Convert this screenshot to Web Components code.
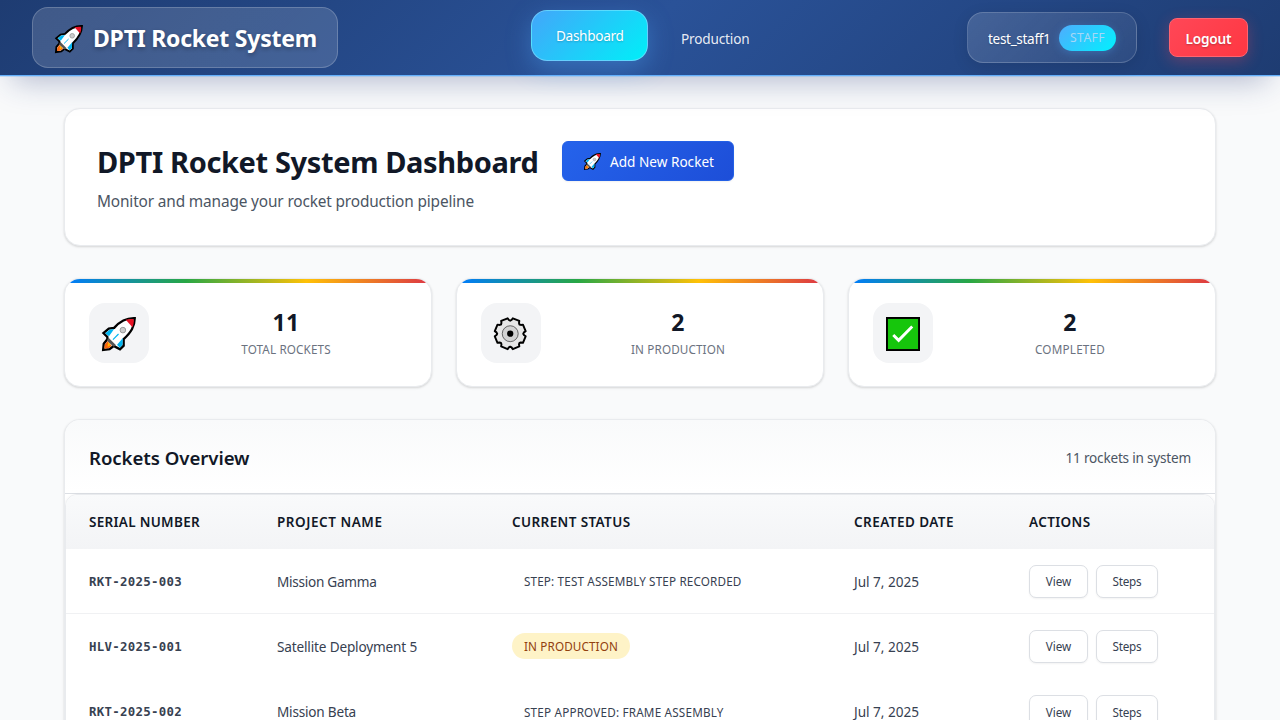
<!DOCTYPE html>
<html lang="en">
<head>
<meta charset="utf-8">
<title>DPTI Rocket System</title>
<style>
html{height:100%;overflow:hidden}
body{margin:0;height:720px;overflow:hidden;background:#f9fafb;font-family:"Noto Sans","Open Sans",sans-serif;color:#374151}
</style>
</head>
<body>
<rocket-dashboard-page></rocket-dashboard-page>
<script>
const define=(name,css,html,ready)=>{
  const t=document.createElement('template');
  t.innerHTML=`<style>*{box-sizing:border-box}${css}</style>${html}`;
  customElements.define(name,class extends HTMLElement{
    constructor(){super();this.attachShadow({mode:'open'}).append(t.content.cloneNode(true));}
    connectedCallback(){if(ready)ready.call(this,this.shadowRoot);}
  });
};

/* A single line of text tracked so that it fills the given width. */
define('fit-text',':host{display:inline-block;white-space:nowrap;flex:none}span{display:inline-block}','<span><slot></slot></span>',function(root){
  const s=root.querySelector('span'),w=+this.getAttribute('w');
  const n=this.textContent.length;
  const own=s.getBoundingClientRect().width;
  s.style.letterSpacing=((w-own)/n)+'px';
  this.style.width=w+'px';
});

const icons={
rocket:`<path d="M33.7 1.2C26 .9 19 3.800 12.5 11.200L7 12 1.500 16.500 5.500 20.500 5.500 23 1.800 27.500 1.200 33.800 7.800 33 12 29.800 18.500 33.300 22.300 29.500 22.300 22.800C30 15.500 33.500 10 33.700 1.200Z" fill="#fff" stroke="#000" stroke-width="2.400"/><path d="M24.500 2.900C27 2.100 30 1.900 32.600 2.300 33 5 32.500 8 31.300 10.500Z" fill="#e81224"/><path d="M12.500 12.400 7.900 13.200 3.300 16.600 7.200 19.700ZM21.500 21.500 15.500 28.500 18.300 31.700 21.100 28.900Z" fill="#00b4f0"/><path d="M6.500 21 14.500 29 12 30.500 5 24.500Z" fill="#555"/><path d="M5.600 25 10 29.500 7.300 31.900 2.400 32.600 2.900 28.300Z" fill="#f7630c"/><path d="M6.200 26 8.800 28.800 5.800 30.800Z" fill="#ffb900"/><circle cx="21.500" cy="13.500" r="2.900" fill="#ccc" stroke="#999" stroke-width="1"/><path d="M17 17.500 11.300 23.200" stroke="#00b4f0" stroke-width="1.200" fill="none"/>`,
gear:'',
check:`<rect x="1" y="1" width="33" height="33" fill="#16c60c" stroke="#000" stroke-width="2"/><path d="M7.500 18.500 13 24 27 9.800" fill="none" stroke="#fff" stroke-width="3"/>`
};
{
  let d='';
  for(let i=0;i<8;i++){
    const c=(i*45-90)*Math.PI/180;
    [[-17,14.2],[-13,16.1],[13,16.1],[17,14.2],[22.5,13.4]].forEach(([a,r],j)=>{
      const q=c+a*Math.PI/180+Math.PI/8;
      d+=(i||j?'L':'M')+(16.7+r*Math.cos(q)).toFixed(2)+' '+(17.2+r*Math.sin(q)).toFixed(2);
    });
  }
  icons.gear=`<path d="${d}Z" fill="#e6e6e6" stroke="#000" stroke-width="2" stroke-linejoin="round"/><circle cx="16.700" cy="17.200" r="8.200" fill="#d2d2d2" stroke="#444" stroke-width=".8"/><circle cx="16.700" cy="17.200" r="3.200" fill="#000"/>`;
}
define('ui-icon',':host{display:block;flex:none}svg{display:block;width:100%;height:100%;overflow:visible}','<svg viewBox="0 0 35 35"></svg>',function(root){
  root.querySelector('svg').innerHTML=icons[this.getAttribute('name')];
  const s=this.getAttribute('size');this.style.width=s+'px';this.style.height=s+'px';
});

define('app-header',`
:host{display:flex;box-sizing:border-box;height:76px;align-items:flex-start;justify-content:space-between;padding:0 32px;position:relative;z-index:2;color:#fff;
background:linear-gradient(135deg,#1e3c72 0%,#2a5298 50%,#1e3c72 100%);border-bottom:1px solid #64b0fb;box-shadow:0 1px 0 rgba(100,176,251,.3),0 16px 32px -12px rgba(30,50,114,.34)}
.brand{display:flex;align-items:center;width:306px;height:61px;margin-top:7px;padding:2px 0 0 22px;gap:10px;border:1px solid rgba(255,255,255,.2);border-radius:16px;background:linear-gradient(135deg,rgba(255,255,255,.15),rgba(255,255,255,.14));font-size:23px;font-weight:700;text-shadow:0 2px 4px rgba(0,0,0,.3)}
.brand fit-text{margin-top:-2px}
nav{display:flex;width:252px;margin-left:9px;font-size:13.600px;font-weight:400}
.on{width:117px;height:51px;margin-top:10px;padding-left:24px;display:flex;align-items:center;border-radius:16px;border:1px solid rgba(130,220,255,.65);background:linear-gradient(135deg,#43a6fa,#00eff8);box-shadow:0 8px 25px rgba(79,172,254,.35);text-shadow:0 1px 2px rgba(0,0,0,.2)}
.off{margin:29px 0 0 33px;color:rgba(255,255,255,.9)}
.right{display:flex;gap:32px;font-size:13.600px}
.user{display:flex;align-items:center;width:170px;height:51px;margin-top:12px;padding-left:20px;border:1px solid rgba(255,255,255,.18);border-radius:16px;background:linear-gradient(135deg,rgba(255,255,255,.15),rgba(255,255,255,.06));box-shadow:0 4px 16px rgba(0,0,0,.1);text-shadow:0 1px 2px rgba(0,0,0,.2)}
.user>fit-text{margin-top:2px}
.role{display:flex;align-items:center;justify-content:center;width:57px;height:26px;margin-left:8px;padding-left:1px;border-radius:13px;background:linear-gradient(135deg,#4facfe,#00f2fe);box-shadow:0 2px 8px rgba(79,172,254,.3);color:#a6d7f6;font-size:12.200px;text-shadow:none}
.out{display:flex;align-items:center;justify-content:center;width:79px;height:39px;margin-top:18px;padding-top:1px;border:1px solid #ff6470;border-radius:8px;background:linear-gradient(135deg,#ff4757,#ff3742);box-shadow:0 4px 15px rgba(255,71,87,.3);font-weight:600;text-shadow:0 1px 2px rgba(0,0,0,.25)}
`,`<div class="brand"><ui-icon name="rocket" size="28"></ui-icon><fit-text w="224">DPTI Rocket System</fit-text></div>
<nav><div class="on"><fit-text w="67.500">Dashboard</fit-text></div><div class="off"><fit-text w="68.500">Production</fit-text></div></nav>
<div class="right"><div class="user"><fit-text w="62.5">test_staff1</fit-text><div class="role"><fit-text w="35">STAFF</fit-text></div></div><div class="out"><fit-text w="46">Logout</fit-text></div></div>`);

define('ui-card',`:host{display:block;border:1px solid #e9ebee;border-radius:16px;background:#fff;box-shadow:0 1px 3px rgba(0,0,0,.1),0 1px 2px rgba(0,0,0,.06)}`,'<slot></slot>');

define('page-intro',`
:host{display:block}
ui-card{height:138px;padding:31px 32px}
.top{display:flex;align-items:center;gap:23.500px;height:41px}
h1{margin:3px 0 0;font-size:29px;line-height:40px;font-weight:700;color:#111827}
.add{display:flex;align-items:center;gap:9px;width:172px;height:40px;padding:0 0 0 21px;border-radius:6px;border:1px solid #2360e6;background:linear-gradient(135deg,#2563eb,#1d4ed8);color:#fff;font-size:13.600px;box-shadow:0 1px 2px rgba(0,0,0,.06)}
.add ui-icon{margin-top:2px}.add fit-text{margin-top:1px}
p{margin:8px 0 0;font-size:15.400px;line-height:26px;color:#4b5563}
`,`<ui-card><div class="top"><h1><fit-text w="441.500">DPTI Rocket System Dashboard</fit-text></h1><div class="add"><ui-icon name="rocket" size="17"></ui-icon><fit-text w="104">Add New Rocket</fit-text></div></div>
<p><fit-text w="377">Monitor and manage your rocket production pipeline</fit-text></p></ui-card>`);

define('stat-card',`
:host{display:block}
ui-card{height:109px;overflow:hidden}
.bar{height:4px;background:linear-gradient(90deg,#007bff,#28a745 33%,#ffc107 66%,#dc3545)}
.row{display:flex;gap:24px;padding:20px 24px}
.ico{display:flex;align-items:center;justify-content:center;width:60px;height:60px;border-radius:16px;background:#f3f4f6;padding:2px 1px 0 0}
.txt{flex:1;display:flex;flex-direction:column;align-items:center;padding-right:8px}
.n{font-size:23px;line-height:36px;font-weight:700;color:#111827;margin-top:1px}
.l{font-size:11.700px;line-height:18px;color:#6b7280}
`,`<ui-card><div class="bar"></div><div class="row"><div class="ico"></div><div class="txt"><div class="n"></div><div class="l"></div></div></div></ui-card>`,function(root){
  const a=k=>this.getAttribute(k);
  root.querySelector('.ico').innerHTML=`<ui-icon name="${a('icon')}" size="34"></ui-icon>`;
  root.querySelector('.n').innerHTML=`<fit-text w="${a('nw')}">${a('value')}</fit-text>`;
  root.querySelector('.l').innerHTML=`<fit-text w="${a('lw')}">${a('label')}</fit-text>`;
});

define('small-button',`:host{display:flex;align-items:center;justify-content:center;height:33px;border:1px solid #dcdfe4;border-radius:7px;background:#fff;color:#374151;font-size:11.700px;box-shadow:0 1px 2px rgba(0,0,0,.05)}`,'<slot></slot>');

define('rocket-row',`
:host{display:grid;grid-template-columns:188px 235px 342px 175px 1fr;align-items:center;height:65.300px;padding-left:24px;font-size:13.600px;color:#374151;border-bottom:1px solid transparent}
:host([line]){border-color:#f0f1f3}
.serial{font-family:"DejaVu Sans Mono","Liberation Mono",monospace;font-size:12.400px;font-weight:700}
.status{display:inline-flex;align-items:center;height:26px;padding:0 12px;border-radius:13px;font-size:11.700px;vertical-align:middle}
.status.prod{background:#fef3c7;color:#92400e}
.act{display:flex;gap:8px}
.v{width:59px}.s{width:62px}
`,'<div class="serial"></div><div class="name"></div><div><span class="status"></span></div><div class="date"><fit-text w="65">Jul 7, 2025</fit-text></div><div class="act"><small-button class="v"><fit-text w="25.500">View</fit-text></small-button><small-button class="s"><fit-text w="29">Steps</fit-text></small-button></div>',function(root){
  const a=k=>this.getAttribute(k),put=(q,w,t)=>root.querySelector(q).innerHTML=`<fit-text w="${w}">${t}</fit-text>`;
  put('.serial',93,a('serial'));put('.name',a('nw'),a('name'));put('.status',a('sw'),a('status'));
  if(this.hasAttribute('prod'))root.querySelector('.status').classList.add('prod');
});

define('rocket-table',`
:host{display:block}
ui-card{height:360px;overflow:hidden}
.head{display:flex;align-items:center;justify-content:space-between;height:74px;padding:1px 24px 0;background:linear-gradient(#f9fafb,#fff);border-bottom:1px solid #dcdfe4}
h2{margin:0;font-size:18.600px;font-weight:600;color:#111827}
.count{font-size:13.600px;color:#4b5563}
.grid{border:1px solid #e9ebee;border-radius:12px 12px 0 0;overflow:hidden;box-shadow:0 1px 3px rgba(0,0,0,.1)}
.cols{display:grid;grid-template-columns:188px 235px 342px 175px 1fr;align-items:center;height:54px;padding:0 0 1px 23px;background:linear-gradient(#f9fafb,#f3f4f6);font-size:13.500px;font-weight:600;color:#111827}
rocket-row{padding-left:23px}
`,`<ui-card><div class="head"><h2><fit-text w="160.500">Rockets Overview</fit-text></h2><div class="count"><fit-text w="125.500">11 rockets in system</fit-text></div></div>
<div class="grid"><div class="cols"><fit-text w="111">SERIAL NUMBER</fit-text><fit-text w="105.500">PROJECT NAME</fit-text><fit-text w="118.500">CURRENT STATUS</fit-text><fit-text w="100">CREATED DATE</fit-text><fit-text w="61.500">ACTIONS</fit-text></div>
<rocket-row line serial="RKT-2025-003" name="Mission Gamma" nw="99.500" status="STEP: TEST ASSEMBLY STEP RECORDED" sw="217.500"></rocket-row>
<rocket-row prod serial="HLV-2025-001" name="Satellite Deployment 5" nw="140" status="IN PRODUCTION" sw="94"></rocket-row>
<rocket-row serial="RKT-2025-002" name="Mission Beta" nw="79" status="STEP APPROVED: FRAME ASSEMBLY" sw="199.500"></rocket-row></div></ui-card>`);

define('rocket-dashboard-page',`
:host{display:block;height:720px;overflow:hidden}
main{display:flex;flex-direction:column;gap:32px;padding:32px 64px 0}
.stats{display:grid;grid-template-columns:repeat(3,1fr);gap:24px}
`,`<app-header></app-header><main><page-intro></page-intro><div class="stats"><stat-card icon="rocket" value="11" nw="27" label="TOTAL ROCKETS" lw="89.500"></stat-card><stat-card icon="gear" value="2" nw="13.500" label="IN PRODUCTION" lw="94"></stat-card><stat-card icon="check" value="2" nw="13.500" label="COMPLETED" lw="70"></stat-card></div><rocket-table></rocket-table></main>`);
</script>
</body>
</html>
